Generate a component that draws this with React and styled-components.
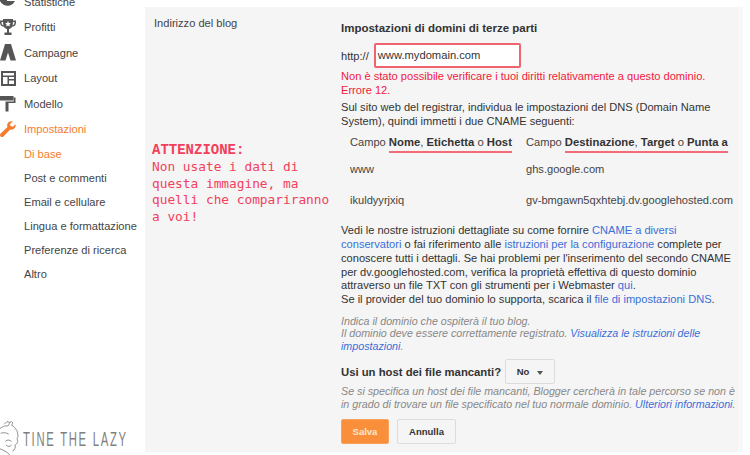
import { createGlobalStyle } from "styled-components";
import styled from "styled-components";

const GlobalStyle = createGlobalStyle`
  html, body {
    margin: 0;
    padding: 0;
    background: #fff;
  }
  body {
    font-family: "Liberation Sans", Arial, sans-serif;
    font-size: 11.1px;
    color: #333;
  }
`;

const Page = styled.div`
  width: 750px;
  height: 455px;
  display: flex;
  overflow: hidden;
  background: #fff;
`;

const Sidebar = styled.nav`
  width: 145px;
  flex-shrink: 0;
  display: flex;
  flex-direction: column;
  justify-content: space-between;
`;

const Menu = styled.ul`
  list-style: none;
  margin: -11px 0 0;
  padding: 0;
`;

const MenuItem = styled.li`
  height: 25.5px;
  display: flex;
  align-items: center;
  gap: 8px;
  color: ${(p) => (p.$active ? "#f57c2c" : "#444")};
  svg {
    width: 16px;
    height: 17px;
    flex-shrink: 0;
  }
`;

const SubMenu = styled.ul`
  list-style: none;
  margin: 0;
  padding: 0 0 0 24px;
`;

const SubItem = styled.li`
  height: 24px;
  display: flex;
  align-items: center;
  color: ${(p) => (p.$active ? "#f57c2c" : "#444")};
`;

const Logo = styled.div`
  height: 40px;
  display: flex;
  align-items: flex-end;
  svg {
    width: 23px;
    height: 38px;
    flex-shrink: 0;
  }
`;

const LogoText = styled.span`
  display: inline-block;
  font-family: "Liberation Sans", sans-serif;
  font-size: 20px;
  line-height: 22px;
  letter-spacing: 3px;
  color: #555;
  white-space: nowrap;
  transform: scaleX(0.565);
  transform-origin: left center;
  margin: 0 0 5px 0;
  font-weight: 400;
  opacity: 0.75;
`;

const Panel = styled.main`
  width: 598px;
  height: 445px;
  margin-top: 7px;
  background: #f5f5f5;
  border-right: 5px solid #f8f8f8;
  display: flex;
  box-sizing: border-box;
`;

const LabelColumn = styled.div`
  width: 196px;
  flex-shrink: 0;
  box-sizing: border-box;
  padding: 9px 0 0 9px;
`;

const FieldLabel = styled.div`
  line-height: 14px;
  color: #444;
`;

const Warning = styled.div`
  margin: 112px 0 0 -2px;
  font-family: "DejaVu Sans Mono", monospace;
  font-size: 12.8px;
  line-height: 16.8px;
  color: #f2405c;
`;

const WarningTitle = styled.div`
  font-family: "Liberation Mono", monospace;
  font-size: 14px;
  font-weight: 700;
`;

const Content = styled.div`
  width: 394px;
  padding-top: 14px;
`;

const Heading = styled.h2`
  margin: 0 0 8px;
  font-size: 11.5px;
  line-height: 14px;
  font-weight: 700;
  color: #333;
`;

const UrlRow = styled.div`
  display: flex;
  align-items: center;
  gap: 5px;
`;

const UrlInput = styled.div`
  width: 147px;
  height: 25px;
  box-sizing: border-box;
  background: #fff;
  border: 2px solid #f0646f;
  border-radius: 2px;
  padding: 0 2px;
  line-height: 21px;
  font-size: 11.2px;
  color: #333;
`;

const ErrorText = styled.p`
  margin: 1px 0 0;
  line-height: 14px;
  color: #f0203c;
`;

const Para = styled.p`
  margin: ${(p) => p.$gap || "4px"} 0 0;
  line-height: 13.7px;
  color: #333;
`;

const DnsTable = styled.div`
  margin-top: 7px;
  display: grid;
  grid-template-columns: 176px 1fr;
  padding-left: 9px;
  color: #444;
  white-space: nowrap;
`;

const DnsHead = styled.div`
  height: 19px;
  line-height: 15px;
`;

const Underlined = styled.span`
  display: inline-block;
  border-bottom: 2.5px solid #f36c78;
  font-size: 11.3px;
  line-height: 15px;
  padding-bottom: 1px;
  b {
    color: #333;
  }
`;

const DnsCell = styled.div`
  height: 31px;
  padding-top: 8px;
  box-sizing: border-box;
  line-height: 14px;
`;

const Link = styled.a`
  color: #3a6fd8;
  text-decoration: none;
`;

const Hint = styled.p`
  margin: 8px 0 0;
  font-size: 10.7px;
  line-height: 12.8px;
  font-style: italic;
  color: #888;
`;

const HostRow = styled.div`
  margin-top: 6px;
  display: flex;
  align-items: center;
  gap: 4px;
`;

const HostLabel = styled.span`
  font-size: 11.3px;
  font-weight: 700;
  color: #333;
`;

const Select = styled.div`
  width: 50px;
  height: 25px;
  box-sizing: border-box;
  display: flex;
  align-items: center;
  justify-content: center;
  gap: 8px;
  background: #f5f5f5;
  border: 1px solid #dcdcdc;
  border-radius: 2px;
  font-size: 9.5px;
  font-weight: 700;
  color: #333;
`;

const Caret = styled.span`
  width: 0;
  height: 0;
  margin-top: 2px;
  border-left: 3.5px solid transparent;
  border-right: 3.5px solid transparent;
  border-top: 4px solid #555;
`;

const HostHint = styled(Hint)`
  margin-top: 1px;
  line-height: 13px;
  white-space: nowrap;
`;

const Actions = styled.div`
  margin-top: 8px;
  display: flex;
  gap: 8px;
`;

const Button = styled.button`
  height: 25px;
  width: ${(p) => (p.$primary ? "48px" : "59px")};
  padding: 0;
  box-sizing: border-box;
  font-family: inherit;
  font-size: 9.5px;
  font-weight: 700;
  border-radius: 2px;
  color: ${(p) => (p.$primary ? "#fde6d2" : "#333")};
  background: ${(p) => (p.$primary ? "#f98f3b" : "#f5f5f5")};
  border: 1px solid ${(p) => (p.$primary ? "#f7a25f" : "#dcdcdc")};
`;

const StatsIcon = () => (
  <svg viewBox="0 0 16 17">
    <path d="M0 1 A8 8 0 1 0 15 8 L7 8 L7 0 A8 8 0 0 0 0 1Z" fill="#555" />
  </svg>
);

const TrophyIcon = () => (
  <svg viewBox="0 0 16 17">
    <path
      d="M3 0h10v1.500h3v2c0 2.500-1.500 4-3.800 4.300C11.500 9 10.200 9.800 9 10v3.500h2.500V16h-7v-2.500H7V10C5.800 9.800 4.500 9 3.800 7.800 1.500 7.500 0 6 0 3.500v-2h3Z M1.500 3v.5c0 1.500.7 2.400 2 2.800C3.200 5.500 3 4.200 3 3Z M14.500 3H13c0 1.200-.2 2.500-.5 3.300 1.300-.4 2-1.300 2-2.800Z"
      fill="#555"
      fillRule="evenodd"
    />
    <path d="M8 2l.9 1.900 2 .2-1.500 1.300.5 2L8 6.400 6.100 7.400l.5-2L5.100 4.100l2-.2Z" fill="#fff" />
  </svg>
);

const CampaignIcon = () => (
  <svg viewBox="0 0 16 17">
    <path d="M5 0h6l1.500 5 3.500 11.500h-5.500L8 8.500 5.500 16.500H0L3.500 5Z" fill="#555" />
  </svg>
);

const LayoutIcon = () => (
  <svg viewBox="0 0 16 17">
    <path
      d="M1 1h15v15H1Z M3 3v2.500h11V3Z M3 7v7h4.500V7Z M9 7v2h5V7Z M9 10.500v3.500h5v-3.500Z"
      fill="#555"
      fillRule="evenodd"
    />
  </svg>
);

const RollerIcon = () => (
  <svg viewBox="0 0 16 17">
    <path d="M0 1h13.500v4.500H0Z" fill="#555" />
    <path d="M13.500 2.500H15.500V8H8.500v8.500H5.500V6.500h8.300Z" fill="#555" />
  </svg>
);

const WrenchIcon = () => (
  <svg viewBox="0 0 16 17">
    <path
      d="M15.500 3.200 12.800 5.800 10.600 5 10 2.900 12.700.5C10.700-.2 8.500.6 7.600 2.400 7 3.600 7 4.900 7.500 6L.6 12.600c-.8.800-.8 2.100 0 2.900.8.800 2.100.7 2.900-.1L10.200 8.500c1.400.5 3 .2 4.100-.9 1.200-1.200 1.700-3 1.200-4.400Z"
      fill="#f57c2c"
    />
  </svg>
);

const LogoFigure = () => (
  <svg viewBox="0 0 24 42" fill="none" stroke="#666" strokeWidth="0.8">
    <path d="M-2 14c3-3 7-5 10-4 2-2 1-4 4-5 2 1 1 3 0 4 3 1 4 4 6 6M18 15c1 4 2 7 0 9 2 3 0 6-2 7 1 3-1 5-3 7" />
    <path d="M4 8l3-3 3 1M0 18c3-1 6-1 9 1M5 27c2-2 5-2 7 0M6 31c2 2 4 2 6 0M-1 35c4 2 8 3 11 7" />
  </svg>
);

export default function App() {
  return (
    <Page>
      <GlobalStyle />
      <Sidebar>
        <div>
          <Menu>
            <MenuItem><StatsIcon />Statistiche</MenuItem>
            <MenuItem><TrophyIcon />Profitti</MenuItem>
            <MenuItem><CampaignIcon />Campagne</MenuItem>
            <MenuItem><LayoutIcon />Layout</MenuItem>
            <MenuItem><RollerIcon />Modello</MenuItem>
            <MenuItem $active><WrenchIcon />Impostazioni</MenuItem>
          </Menu>
          <SubMenu>
            <SubItem $active>Di base</SubItem>
            <SubItem>Post e commenti</SubItem>
            <SubItem>Email e cellulare</SubItem>
            <SubItem>Lingua e formattazione</SubItem>
            <SubItem>Preferenze di ricerca</SubItem>
            <SubItem>Altro</SubItem>
          </SubMenu>
        </div>
        <Logo>
          <LogoFigure />
          <LogoText>TINE THE LAZY</LogoText>
        </Logo>
      </Sidebar>
      <Panel>
        <LabelColumn>
          <FieldLabel>Indirizzo del blog</FieldLabel>
          <Warning>
            <WarningTitle>ATTENZIONE:</WarningTitle>
            Non usate i dati di<br />
            questa immagine, ma<br />
            quelli che compariranno<br />
            a voi!
          </Warning>
        </LabelColumn>
        <Content>
          <Heading>Impostazioni di domini di terze parti</Heading>
          <UrlRow>
            http://
            <UrlInput>www.mydomain.com</UrlInput>
          </UrlRow>
          <ErrorText>
            Non è stato possibile verificare i tuoi diritti relativamente a questo dominio. Errore 12.
          </ErrorText>
          <Para>
            Sul sito web del registrar, individua le impostazioni del DNS (Domain Name System), quindi immetti i due CNAME seguenti:
          </Para>
          <DnsTable>
            <DnsHead>
              Campo <Underlined><b>Nome</b>, <b>Etichetta</b> o <b>Host</b></Underlined>
            </DnsHead>
            <DnsHead>
              Campo <Underlined><b>Destinazione</b>, <b>Target</b> o <b>Punta a</b></Underlined>
            </DnsHead>
            <DnsCell>www</DnsCell>
            <DnsCell>ghs.google.com</DnsCell>
            <DnsCell>ikuldyyrjxiq</DnsCell>
            <DnsCell>gv-bmgawn5qxhtebj.dv.googlehosted.com</DnsCell>
          </DnsTable>
          <Para $gap="8px">
            Vedi le nostre istruzioni dettagliate su come fornire <Link>CNAME a diversi conservatori</Link> o fai riferimento alle <Link>istruzioni per la configurazione</Link> complete per conoscere tutti i dettagli. Se hai problemi per l'inserimento del secondo CNAME per dv.googlehosted.com, verifica la proprietà effettiva di questo dominio attraverso un file TXT con gli strumenti per i Webmaster <Link>qui</Link>.
            <br />
            Se il provider del tuo dominio lo supporta, scarica il <Link>file di impostazioni DNS</Link>.
          </Para>
          <Hint>
            Indica il dominio che ospiterà il tuo blog.
            <br />
            Il dominio deve essere correttamente registrato. <Link>Visualizza le istruzioni delle impostazioni</Link>.
          </Hint>
          <HostRow>
            <HostLabel>Usi un host dei file mancanti?</HostLabel>
            <Select>No <Caret /></Select>
          </HostRow>
          <HostHint>
            Se si specifica un host dei file mancanti, Blogger cercherà in tale percorso se non è
            <br />
            in grado di trovare un file specificato nel tuo normale dominio. <Link>Ulteriori informazioni</Link>.
          </HostHint>
          <Actions>
            <Button $primary>Salva</Button>
            <Button>Annulla</Button>
          </Actions>
        </Content>
      </Panel>
    </Page>
  );
}
